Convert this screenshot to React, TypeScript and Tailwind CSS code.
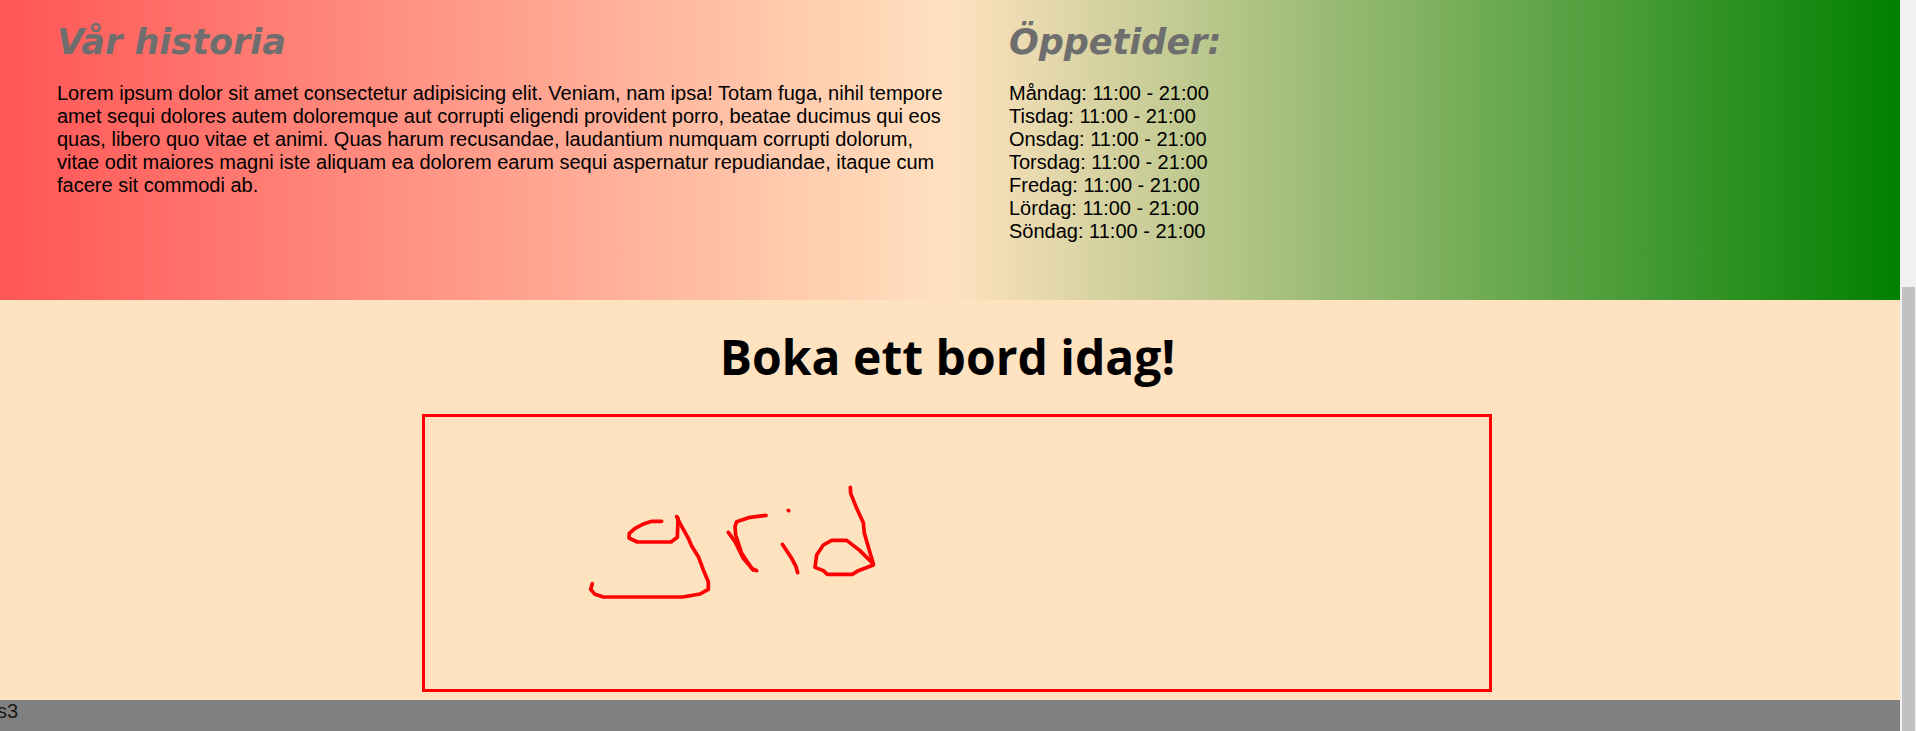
import React from 'react';

const hours = [
  'Måndag: 11:00 - 21:00',
  'Tisdag: 11:00 - 21:00',
  'Onsdag: 11:00 - 21:00',
  'Torsdag: 11:00 - 21:00',
  'Fredag: 11:00 - 21:00',
  'Lördag: 11:00 - 21:00',
  'Söndag: 11:00 - 21:00',
];

// Hand drawn "grid" scribble inside the red box
const GridScribble = () => {
  return (
    <svg
      width="340"
      height="160"
      viewBox="0 0 1020 480"
      fill="none"
      stroke="#ff0000"
      strokeWidth="11"
      strokeLinejoin="round"
      strokeLinecap="round"
    >
      <polyline points="305,184 275,184 248,193 225,205 208,220 207,234 232,246 333,246 352,232 354,175 350,170" />
      <polyline points="350,170 360,190 385,235 395,258 415,290 430,330 445,365 445,388 420,402 368,411 130,411 105,403 92,388 97,371" />
      <polyline points="618,166 570,172 530,185 525,200 527,225 545,280 575,325 590,332" />
      <polyline points="505,217 525,245 550,295 580,330" />
      <polyline points="685,151 686,152" />
      <polyline points="667,253 695,295 708,320 713,338" />
      <polyline points="871,82 872,100 890,145 910,188 913,220 940,312" />
      <polyline points="940,312 900,272 860,241 815,241 790,255 770,285 765,322 790,332 802,343 877,343 895,332 940,315" />
    </svg>
  );
};

const App = () => {
  return (
    <div className="flex h-[731px] w-[1916px] overflow-hidden font-['Liberation_Sans',Arial,sans-serif]">
      <div className="flex w-[1900px] flex-col bg-[#ffe2c0]">
        <section className="grid h-[300px] grid-cols-2 bg-linear-to-r/srgb from-[#ff5555] via-[#ffe2c0] to-[#008000] text-[20px] leading-[23px] text-black">
          <div className="pt-[21px] pl-[57px]">
            <h2 className="mb-[18px] font-['DejaVu_Sans',sans-serif] text-[35px] leading-[43px] font-bold text-[#6e6e6e] italic">
              Vår historia
            </h2>
            <p>
              Lorem ipsum dolor sit amet consectetur adipisicing elit. Veniam, nam ipsa! Totam fuga, nihil tempore amet
              sequi dolores autem doloremque aut corrupti eligendi provident porro, beatae ducimus qui eos quas, libero
              quo vitae et animi. Quas harum recusandae, laudantium numquam corrupti dolorum, vitae odit maiores magni
              iste aliquam ea dolorem earum sequi aspernatur repudiandae, itaque cum facere sit commodi ab.
            </p>
          </div>
          <div className="pt-[21px] pl-[59px]">
            <h2 className="mb-[18px] font-['DejaVu_Sans',sans-serif] text-[35px] leading-[43px] font-bold text-[#6e6e6e] italic">
              Öppetider:
            </h2>
            <ul>
              {hours.map((line) => (
                <li key={line}>{line}</li>
              ))}
            </ul>
          </div>
        </section>

        <section className="flex-1">
          <h1 className="pt-[22px] pr-[5px] pb-[22px] text-center font-['Open_Sans',sans-serif] text-[48px] leading-[70px] font-bold text-black">
            Boka ett bord idag!
          </h1>
          <div className="ml-[422px] h-[278px] w-[1070px] border-[3px] border-[#ff0000] pt-[43px] pl-[135px]">
            <GridScribble />
          </div>
        </section>

        <footer className="h-[31px] bg-[#808080] text-[20px] leading-[23px] text-[#1a1a1a]">
          <span className="-ml-[3px] block">s3</span>
        </footer>
      </div>

      {/* Browser scrollbar */}
      <div className="w-4 bg-[#f1f1f1] pt-[287px] pl-[2px]">
        <div className="h-[444px] w-[13px] bg-[#c1c1c1]" />
      </div>
    </div>
  );
};

export default App;
